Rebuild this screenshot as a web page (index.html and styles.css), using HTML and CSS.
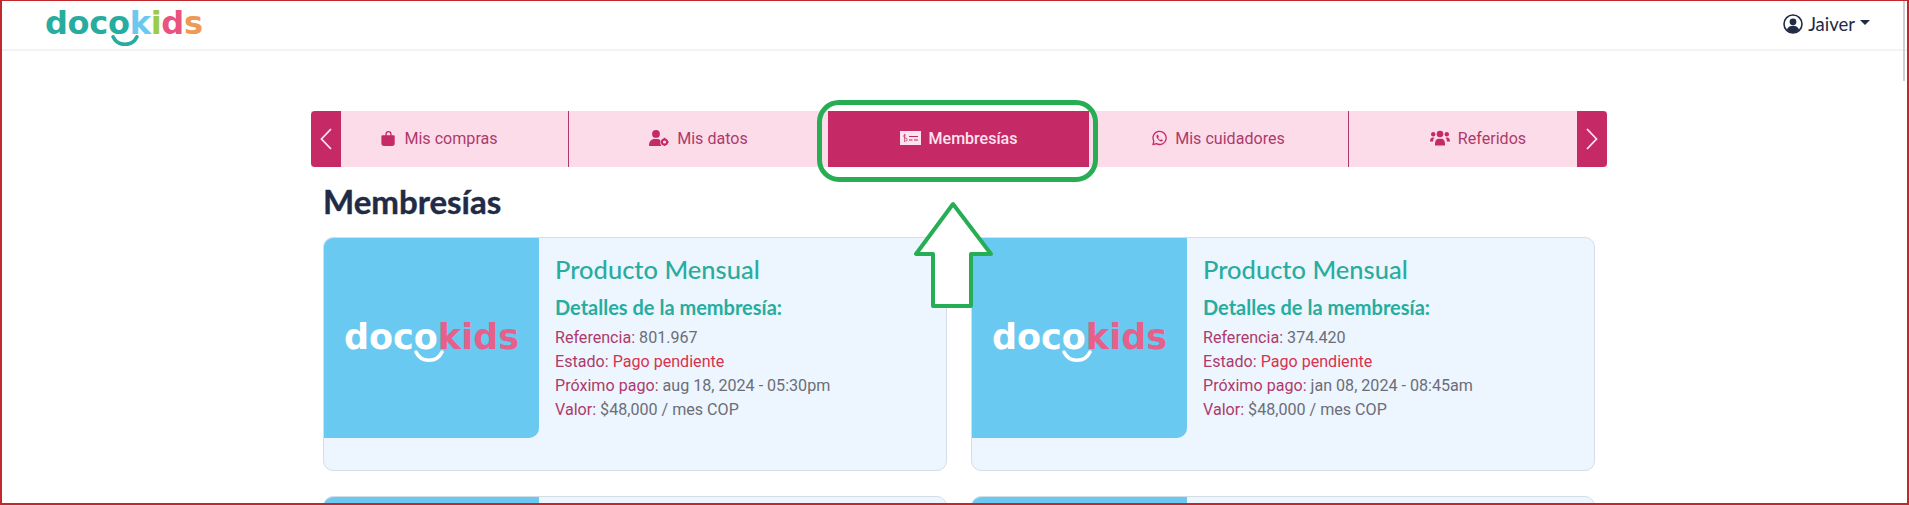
FILE: index.html
```html
<!DOCTYPE html>
<html lang="es">
<head>
  <meta charset="UTF-8" />
  <meta name="viewport" content="width=device-width, initial-scale=1.0" />
  <title>Membresías - docokids</title>
  <link rel="stylesheet" href="styles.css">
</head>
<body>
  <div class="frame">
    <header class="navbar">
      <div class="logo">
        <span class="teal">doco</span><span class="sky">k</span><span class="lime">i</span><span class="rose">d</span><span class="orange">s</span>
        <svg class="smile" viewBox="0 0 30 12"><path d="M2 2c5 11 21 11 26 0" fill="none" stroke="#27ada0" stroke-width="4" stroke-linecap="round"/></svg>
      </div>
      <div class="user">
        <svg class="user-icon" viewBox="0 0 20 20"><circle cx="10" cy="10" r="9" fill="none" stroke="#222b45" stroke-width="1.6"/><circle cx="10" cy="7.8" r="3.4" fill="#222b45"/><path d="M3.8 15.6c1.5-3 3.6-3.8 6.2-3.8s4.7.8 6.2 3.8A9 9 0 0 1 10 19a9 9 0 0 1-6.2-3.4z" fill="#222b45"/></svg>
        <span>Jaiver</span>
        <i class="caret"></i>
      </div>
    </header>

    <main class="content">
      <nav class="tabs">
        <a class="tab">
          <svg viewBox="0 0 16 18"><path d="M4.5 6V4.5a3.5 3.5 0 0 1 7 0V6H14a1 1 0 0 1 1 1v8a3 3 0 0 1-3 3H3a3 3 0 0 1-3-3V7a1 1 0 0 1 1-1zM6 6h4V4.5a2 2 0 0 0-4 0z" fill="#c62a66" fill-rule="evenodd"/></svg>
          Mis compras
        </a>
        <a class="tab">
          <svg class="wide" viewBox="0 0 20 16"><circle cx="7" cy="3.9" r="3.9" fill="#c62a66"/><path d="M0 16c0-5 2.5-7 5.5-7h3c1 0 2 .3 2.8.9-.5 2 .1 4.5 1.2 6.1z" fill="#c62a66"/><circle cx="15.5" cy="12" r="2.6" fill="none" stroke="#c62a66" stroke-width="2"/><path d="M15.5 7.8v1.4M15.5 14.8V16M11.5 12h1.2M18.3 12h1.4" stroke="#c62a66" stroke-width="1.6"/></svg>
          Mis datos
        </a>
        <a class="tab active">
          <svg class="check" viewBox="0 0 21 14"><rect width="21" height="14" fill="#fde3ee"/><path d="M9 5.5h9M9 9h3.5M14 9h4" stroke="#c62a66" stroke-width="1.2"/><path d="M5.5 4c-2-.8-2.5 2.5 0 3s2 3.500 0 3M4.700 3v8" fill="none" stroke="#c62a66" stroke-width=".8"/></svg>
          Membresías
        </a>
        <a class="tab">
          <svg viewBox="0 0 16 16"><path d="M1 15l1-3.700A7 7 0 1 1 4.700 14z" fill="none" stroke="#c62a66" stroke-width="1.4" stroke-linejoin="round"/><path d="M5.5 4.500c-1 .8-1 2.200 0 3.800 1 1.700 2.400 2.900 4 3.300 1.200.2 2-.5 2.100-1.400l-1.800-1-.8.900c-1-.4-2-1.400-2.500-2.500l.8-.8-.8-2.200z" fill="#c62a66"/></svg>
          Mis cuidadores
        </a>
        <a class="tab">
          <svg class="wide" viewBox="0 0 20 15"><circle cx="10" cy="3.5" r="3.3" fill="#c62a66"/><circle cx="3.2" cy="3.8" r="2.2" fill="#c62a66"/><circle cx="16.8" cy="3.8" r="2.2" fill="#c62a66"/><path d="M5 15v-2c0-3 1.800-4.800 3.500-4.800h3c1.700 0 3.500 1.800 3.500 4.800v2z" fill="#c62a66"/><path d="M0 11c0-2.500 1.200-4 3-4h1.500c-.9 1-1.500 2.500-1.500 4zM20 11c0-2.500-1.200-4-3-4h-1.500c.9 1 1.500 2.500 1.500 4z" fill="#c62a66"/></svg>
          Referidos
        </a>
        <button class="arrow arrow-left"><svg viewBox="0 0 12 22"><path d="M11 1 1.500 11l9.500 10" fill="none" stroke="#fde3ee" stroke-width="1.8"/></svg></button>
        <button class="arrow arrow-right"><svg viewBox="0 0 12 22"><path d="M1 1l9.500 10L1 21" fill="none" stroke="#fde3ee" stroke-width="1.8"/></svg></button>
      </nav>

      <h1 class="page-title">Membresías</h1>

      <section class="cards">
        <article class="card">
          <div class="card-img">
            <div class="img-logo"><span class="white">doco</span><span class="pink">kids</span>
              <svg class="img-smile" viewBox="0 0 30 12"><path d="M2 2c5 11 21 11 26 0" fill="none" stroke="#fff" stroke-width="3.5" stroke-linecap="round"/></svg>
            </div>
          </div>
          <div class="card-body">
            <h2>Producto Mensual</h2>
            <h3>Detalles de la membresía:</h3>
            <p><b>Referencia:</b> 801.967</p>
            <p><b>Estado:</b> <em>Pago pendiente</em></p>
            <p><b>Próximo pago:</b> aug 18, 2024 - 05:30pm</p>
            <p><b>Valor:</b> $48,000 / mes COP</p>
          </div>
        </article>
        <article class="card">
          <div class="card-img">
            <div class="img-logo"><span class="white">doco</span><span class="pink">kids</span>
              <svg class="img-smile" viewBox="0 0 30 12"><path d="M2 2c5 11 21 11 26 0" fill="none" stroke="#fff" stroke-width="3.5" stroke-linecap="round"/></svg>
            </div>
          </div>
          <div class="card-body">
            <h2>Producto Mensual</h2>
            <h3>Detalles de la membresía:</h3>
            <p><b>Referencia:</b> 374.420</p>
            <p><b>Estado:</b> <em>Pago pendiente</em></p>
            <p><b>Próximo pago:</b> jan 08, 2024 - 08:45am</p>
            <p><b>Valor:</b> $48,000 / mes COP</p>
          </div>
        </article>
        <article class="card"><div class="card-img"></div></article>
        <article class="card"><div class="card-img"></div></article>
      </section>
    </main>

    <div class="mark-box"></div>
    <svg class="mark-arrow" viewBox="0 0 90 110"><path d="M43 5 6 55h17v52h38V55h20z" fill="#fff" stroke="#27ae55" stroke-width="4" stroke-linejoin="round"/></svg>
  </div>
</body>
</html>
```

FILE: styles.css
```css
html, body {
  margin: 0;
  padding: 0;
  height: 100%;
  overflow: hidden;
  background: #ffffff;
  font-family: Roboto, sans-serif;
}
.frame {
  position: relative;
  box-sizing: border-box;
  height: 505px;
  overflow: hidden;
  border: 1px solid #c0282d;
  border-width: 1px 2px 2px 2px;
  background: #ffffff;
}
.frame::before {
  content: "";
  position: absolute;
  top: 0;
  right: 2px;
  width: 2px;
  height: 80px;
  background: #cfcfd2;
}
.navbar {
  display: flex;
  justify-content: space-between;
  align-items: center;
  height: 50px;
  box-sizing: border-box;
  padding: 0 37px 0 43px;
  border-bottom: 2px solid #f3f3f4;
}
.logo {
  position: relative;
  font-family: "DejaVu Sans", sans-serif;
  font-weight: 700;
  font-size: 32px;
  line-height: 38px;
  letter-spacing: -0.3px;
  margin-top: -4px;
}
.teal { color: #27ada0; }
.sky { color: #6ec8ee; }
.lime { color: #9ccb4c; }
.rose { color: #e8547f; }
.orange { color: #ee9a55; }
.smile {
  position: absolute;
  left: 66px;
  top: 31px;
  width: 28px;
  height: 11px;
}
.user {
  display: flex;
  align-items: center;
  gap: 5px;
  color: #222b45;
  font-family: Lato, sans-serif;
  font-size: 18.5px;
  margin-top: -3px;
}
.user-icon {
  width: 20px;
  height: 20px;
}
.caret {
  border-top: 5px solid #222b45;
  border-left: 5px solid transparent;
  border-right: 5px solid transparent;
  margin-bottom: 3px;
}
.content {
  width: 1296px;
  margin: 60px 0 0 309px;
}
.tabs {
  position: relative;
  display: flex;
  height: 56px;
  background: #fddce9;
}
.arrow {
  position: absolute;
  top: 0;
  width: 30px;
  height: 56px;
  padding: 0;
  border: none;
  background: #c62a66;
  display: flex;
  align-items: center;
  justify-content: center;
}
.arrow svg {
  width: 12px;
  height: 22px;
}
.arrow-left { left: 0; border-radius: 4px 0 0 4px; }
.arrow-right { right: 0; border-radius: 0 4px 4px 0; }
.tab {
  flex: none;
  box-sizing: border-box;
  display: flex;
  align-items: center;
  justify-content: center;
  gap: 8px;
  padding-bottom: 2px;
  font-size: 16.1px;
  color: #ad3a6c;
}
.tab:nth-child(1) { width: 258px; border-right: 1px solid #ad3a6c; }
.tab:nth-child(2) { width: 259px; }
.tab:nth-child(3) { width: 261px; }
.tab:nth-child(4) { width: 260px; border-right: 1px solid #ad3a6c; }
.tab:nth-child(5) { width: 258px; }
.tab svg {
  width: 15px;
  height: 16px;
}
.tab svg.wide {
  width: 20px;
}
.tab svg.check {
  width: 21px;
  height: 14px;
}
.tab.active {
  background: #c62a66;
  color: #fde3ee;
  font-weight: 500;
  font-size: 16px;
}
.page-title {
  margin: 16px 0 0 12px;
  font-family: Lato, sans-serif;
  font-weight: 700;
  font-size: 33px;
  line-height: 36px;
  color: #222b45;
  -webkit-text-stroke: 0.4px #222b45;
}
.cards {
  display: grid;
  grid-template-columns: 1fr 1fr;
  gap: 25px 24px;
  padding: 0 12px;
  margin-top: 18px;
}
.card {
  display: flex;
  align-items: flex-start;
  box-sizing: border-box;
  height: 234px;
  background: #edf5fe;
  border: 1px solid #d5dde6;
  border-radius: 10px;
}
.card-img {
  flex: none;
  width: 215px;
  height: 200px;
  display: flex;
  align-items: center;
  justify-content: center;
  background: #69c9f0;
  border-radius: 9px 0 10px 0;
}
.img-logo {
  position: relative;
  font-family: "DejaVu Sans", sans-serif;
  font-weight: 700;
  font-size: 35px;
  line-height: 40px;
  margin-top: -3px;
}
.white { color: #ffffff; }
.pink { color: #e6608c; }
.img-smile {
  position: absolute;
  left: 70px;
  top: 33px;
  width: 30px;
  height: 12px;
}
.card-body {
  padding: 15px 0 0 16px;
}
.card-body h2 {
  margin: 0;
  font-family: Lato, sans-serif;
  font-weight: 500;
  font-size: 25.5px;
  line-height: 32px;
  color: #27ada0;
}
.card-body h3 {
  margin: 9px 0 6px;
  font-family: Lato, sans-serif;
  font-weight: 700;
  font-size: 20px;
  line-height: 26px;
  color: #27ada0;
}
.card-body p {
  margin: 0;
  font-size: 16.1px;
  line-height: 24px;
  color: #6b6e78;
}
.card-body b {
  font-weight: 400;
  color: #ad3a6c;
}
.card-body em {
  font-style: normal;
  color: #d8324f;
}
.mark-box {
  position: absolute;
  left: 815px;
  top: 99px;
  width: 271px;
  height: 72px;
  border: 5px solid #27ae55;
  border-radius: 22px;
}
.mark-arrow {
  position: absolute;
  left: 908px;
  top: 198px;
  width: 90px;
  height: 110px;
}
```
